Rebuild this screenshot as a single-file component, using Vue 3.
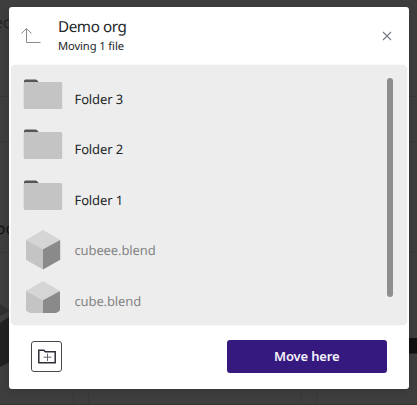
<template>
  <div class="page">
    <svg class="backdrop" width="417" height="405" viewBox="0 0 417 405" aria-hidden="true">
      <rect width="417" height="405" fill="#3e3e3e" />
      <path d="M0 96.500H417M0 141.500H417M0 252.500H417M73.500 252V405M88.500 252V405M301.500 252V405M316.500 252V405" stroke="#383838" />
      <path d="M0 404.500H417" stroke="#353535" />
      <path d="M0 304L10 311L0 316Z" fill="#303030" />
      <path d="M0 323L10 316V362L0 367Z" fill="#222" />
      <rect x="400" y="338" width="17" height="15.500" fill="#111" />
      <text x="-6" y="28" font-size="15.500" fill="#222">ec</text>
      <text x="-4" y="234" font-size="15.500" fill="#111">oc</text>
    </svg>

    <div class="dialog">
      <header class="dialog-header">
        <button class="btn-icon btn-up" title="Up">
          <svg width="20" height="18" viewBox="0 0 20 18" fill="none" stroke="#858b91">
            <path d="M5.500 2V15.500H19.500M0.500 6.500L5.500 1.500L10.500 6.500" />
          </svg>
        </button>
        <div class="titles">
          <h3>Demo org</h3>
          <p>Moving 1 file</p>
        </div>
        <button class="btn-icon" title="Close">
          <svg width="10" height="10" viewBox="0 0 10 10" fill="none" stroke="#727b84" stroke-width="1.100">
            <path d="M1 1L9 9M9 1L1 9" />
          </svg>
        </button>
      </header>

      <div class="list-panel">
        <ul class="list">
          <li v-for="item in items" :key="item.name" class="item" :class="item.type">
            <span class="thumb">
              <svg v-if="item.type === 'folder'" width="40" height="40" viewBox="0 0 40 40">
                <path d="M1 5V2Q1 0.500 2.500 0.500H12.500Q13.500 0.500 14.200 1.300L16.500 4H20V8H1Z" fill="#555" />
                <rect x="0.700" y="3" width="38.500" height="27" rx="1.500" fill="#c4c4c4" />
              </svg>
              <svg v-else width="40" height="40" viewBox="0 0 40 40">
                <path d="M20 0L37.200 10L20 19.300L3 10Z" fill="#d5d5d5" />
                <path d="M3 10L20 19.300V39.500L3 29.700Z" fill="#c4c4c4" />
                <path d="M37.200 10L20 19.300V39.500L37.200 29.700Z" fill="#8a8a8a" />
              </svg>
            </span>
            <span class="name">{{ item.name }}</span>
          </li>
        </ul>
        <div class="scrollbar"></div>
      </div>

      <footer class="dialog-footer">
        <button class="btn-new" title="New folder">
          <svg width="18" height="15" viewBox="0 0 18 15" fill="none" stroke="#2c2f35">
            <path d="M0.800 13.700V1.200H5.800L7.300 2.700H17.200V13.700Z" stroke-width="1.500" />
            <path d="M9.500 4.500V12M5.500 8.200H13.500" stroke="#55585c" stroke-width="0.900" />
          </svg>
        </button>
        <button class="btn-move">Move here</button>
      </footer>
    </div>
  </div>
</template>

<script setup>
const items = [
  { name: 'Folder 3', type: 'folder' },
  { name: 'Folder 2', type: 'folder' },
  { name: 'Folder 1', type: 'folder' },
  { name: 'cubeee.blend', type: 'file' },
  { name: 'cube.blend', type: 'file' }
]
</script>

<style>
body {
  margin: 0;
  overflow: hidden;
}
</style>

<style scoped>
.page {
  position: relative;
  box-sizing: border-box;
  width: 417px;
  height: 405px;
  padding: 7px 8px 16px 9px;
  overflow: hidden;
  font-family: "Noto Sans", sans-serif;
  text-rendering: geometricPrecision;
  color: #232629;
}

.backdrop {
  position: absolute;
  inset: 0;
}

.dialog {
  position: relative;
  box-sizing: border-box;
  display: flex;
  flex-direction: column;
  height: 382px;
  background: white;
  border-radius: 3px;
  box-shadow: 0 2px 8px rgba(0, 0, 0, 0.15);
}

button {
  font-family: inherit;
  padding: 0;
  cursor: pointer;
}

svg {
  display: block;
}

.dialog-header {
  box-sizing: border-box;
  display: flex;
  align-items: center;
  height: 58px;
  padding: 0 17px 0 12px;
}

.btn-icon {
  background: none;
  border: none;
}

.btn-up {
  width: 37px;
}

.titles {
  flex: 1;
}

.titles h3 {
  margin: 0;
  font-size: 15.2px;
  font-weight: 400;
  line-height: 18px;
  letter-spacing: -0.400px;
}

.titles p {
  margin: 3px 0 0;
  font-size: 11.2px;
  line-height: 16px;
  letter-spacing: -0.100px;
}

.list-panel {
  box-sizing: border-box;
  display: flex;
  justify-content: space-between;
  height: 260px;
  margin: 0 2px;
  padding: 8.500px 14px 11.500px 12px;
  background: #ededed;
  border-radius: 5px;
  box-shadow: 0 0 1px rgba(0, 0, 0, 0.2);
}

.list {
  flex: 1;
  height: 240px;
  margin: 0;
  padding: 0;
  overflow: hidden;
  list-style: none;
}

.item {
  display: flex;
  align-items: center;
  gap: 11.5px;
  height: 50.5px;
  font-size: 13px;
  letter-spacing: -0.120px;
}

.item.file {
  color: #848484;
}

.thumb {
  width: 40px;
  height: 40px;
}

.item:last-child .thumb {
  align-self: flex-start;
  width: 34.200px;
  height: 32px;
  margin: 5px 2.800px 0 3px;
  overflow: hidden;
  border-radius: 0 0 4px 4px;
}

.item:last-child .thumb svg {
  margin-left: -3px;
}

.scrollbar {
  width: 6.500px;
  height: 219.500px;
  margin-top: 4px;
  background: #8e8e8e;
  border-radius: 4px;
}

.dialog-footer {
  flex: 1;
  display: flex;
  align-items: center;
  justify-content: space-between;
  padding: 0 22px 1.500px;
}

.btn-new {
  display: flex;
  align-items: center;
  justify-content: center;
  width: 31px;
  height: 31px;
  background: white;
  border: 1px solid #45484b;
  border-radius: 3px;
}

.btn-move {
  width: 160.500px;
  height: 33px;
  background: #35197f;
  border: none;
  border-radius: 3px;
  color: #f5f3fa;
  font-size: 13px;
  font-weight: 600;
  letter-spacing: -0.150px;
}
</style>
